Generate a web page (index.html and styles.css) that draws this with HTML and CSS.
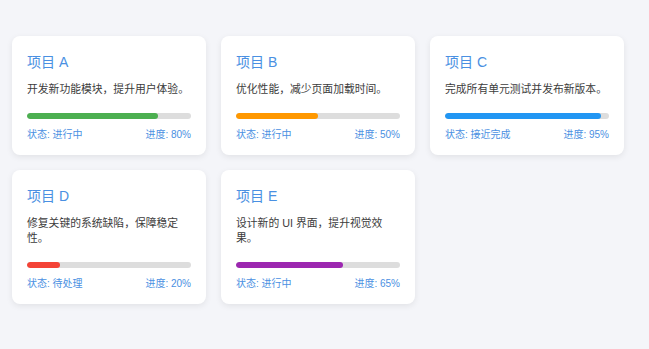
FILE: index.html
```html
<!DOCTYPE html>
<html lang="zh">
<head>
<meta charset="utf-8">
<link rel="stylesheet" href="styles.css">
</head>
<body>
<div class="grid">
  <div class="card">
    <h3 class="title">项目 A</h3>
    <p class="desc">开发新功能模块，提升用户体验。</p>
    <div class="track"><div class="fill green" style="width:80%"></div></div>
    <div class="meta"><span>状态: 进行中</span><span>进度: 80%</span></div>
  </div>
  <div class="card">
    <h3 class="title">项目 B</h3>
    <p class="desc">优化性能，减少页面加载时间。</p>
    <div class="track"><div class="fill orange" style="width:50%"></div></div>
    <div class="meta"><span>状态: 进行中</span><span>进度: 50%</span></div>
  </div>
  <div class="card">
    <h3 class="title">项目 C</h3>
    <p class="desc">完成所有单元测试并发布新版本。</p>
    <div class="track"><div class="fill blue" style="width:95%"></div></div>
    <div class="meta"><span>状态: 接近完成</span><span>进度: 95%</span></div>
  </div>
  <div class="card">
    <h3 class="title">项目 D</h3>
    <p class="desc">修复关键的系统缺陷，保障稳定性。</p>
    <div class="track"><div class="fill red" style="width:20%"></div></div>
    <div class="meta"><span>状态: 待处理</span><span>进度: 20%</span></div>
  </div>
  <div class="card">
    <h3 class="title">项目 E</h3>
    <p class="desc">设计新的 UI 界面，提升视觉效果。</p>
    <div class="track"><div class="fill purple" style="width:65%"></div></div>
    <div class="meta"><span>状态: 进行中</span><span>进度: 65%</span></div>
  </div>
</div>
</body>
</html>
```
FILE: styles.css
```css
html, body {
  margin: 0;
  background: #f4f5f9;
  font-family: "Liberation Sans", "Noto Sans CJK SC", sans-serif;
}
.grid {
  display: grid;
  grid-template-columns: repeat(3, 194px);
  gap: 15px;
  padding: 36px 12px;
}
.card {
  background: #fff;
  border-radius: 8px;
  box-shadow: 0 2px 6px rgba(0, 0, 0, 0.08);
  padding: 16px 15px 13px;
  display: flex;
  flex-direction: column;
}
.title {
  margin: 0 0 10px;
  font-size: 14px;
  line-height: 20px;
  font-weight: 400;
  color: #4a90e2;
}
.desc {
  margin: 0 0 16px;
  font-size: 10.8px;
  line-height: 15px;
  color: #3c3c3c;
}
.track {
  height: 6px;
  border-radius: 3px;
  background: #ddd;
  overflow: hidden;
  margin-top: auto;
}
.fill {
  height: 100%;
  border-radius: 3px;
}
.green { background: #4caf50; }
.orange { background: #ff9800; }
.blue { background: #2196f3; }
.red { background: #f44336; }
.purple { background: #9c27b0; }
.meta {
  display: flex;
  justify-content: space-between;
  margin-top: 9px;
  font-size: 10px;
  line-height: 14px;
  color: #4a90e2;
}
```
